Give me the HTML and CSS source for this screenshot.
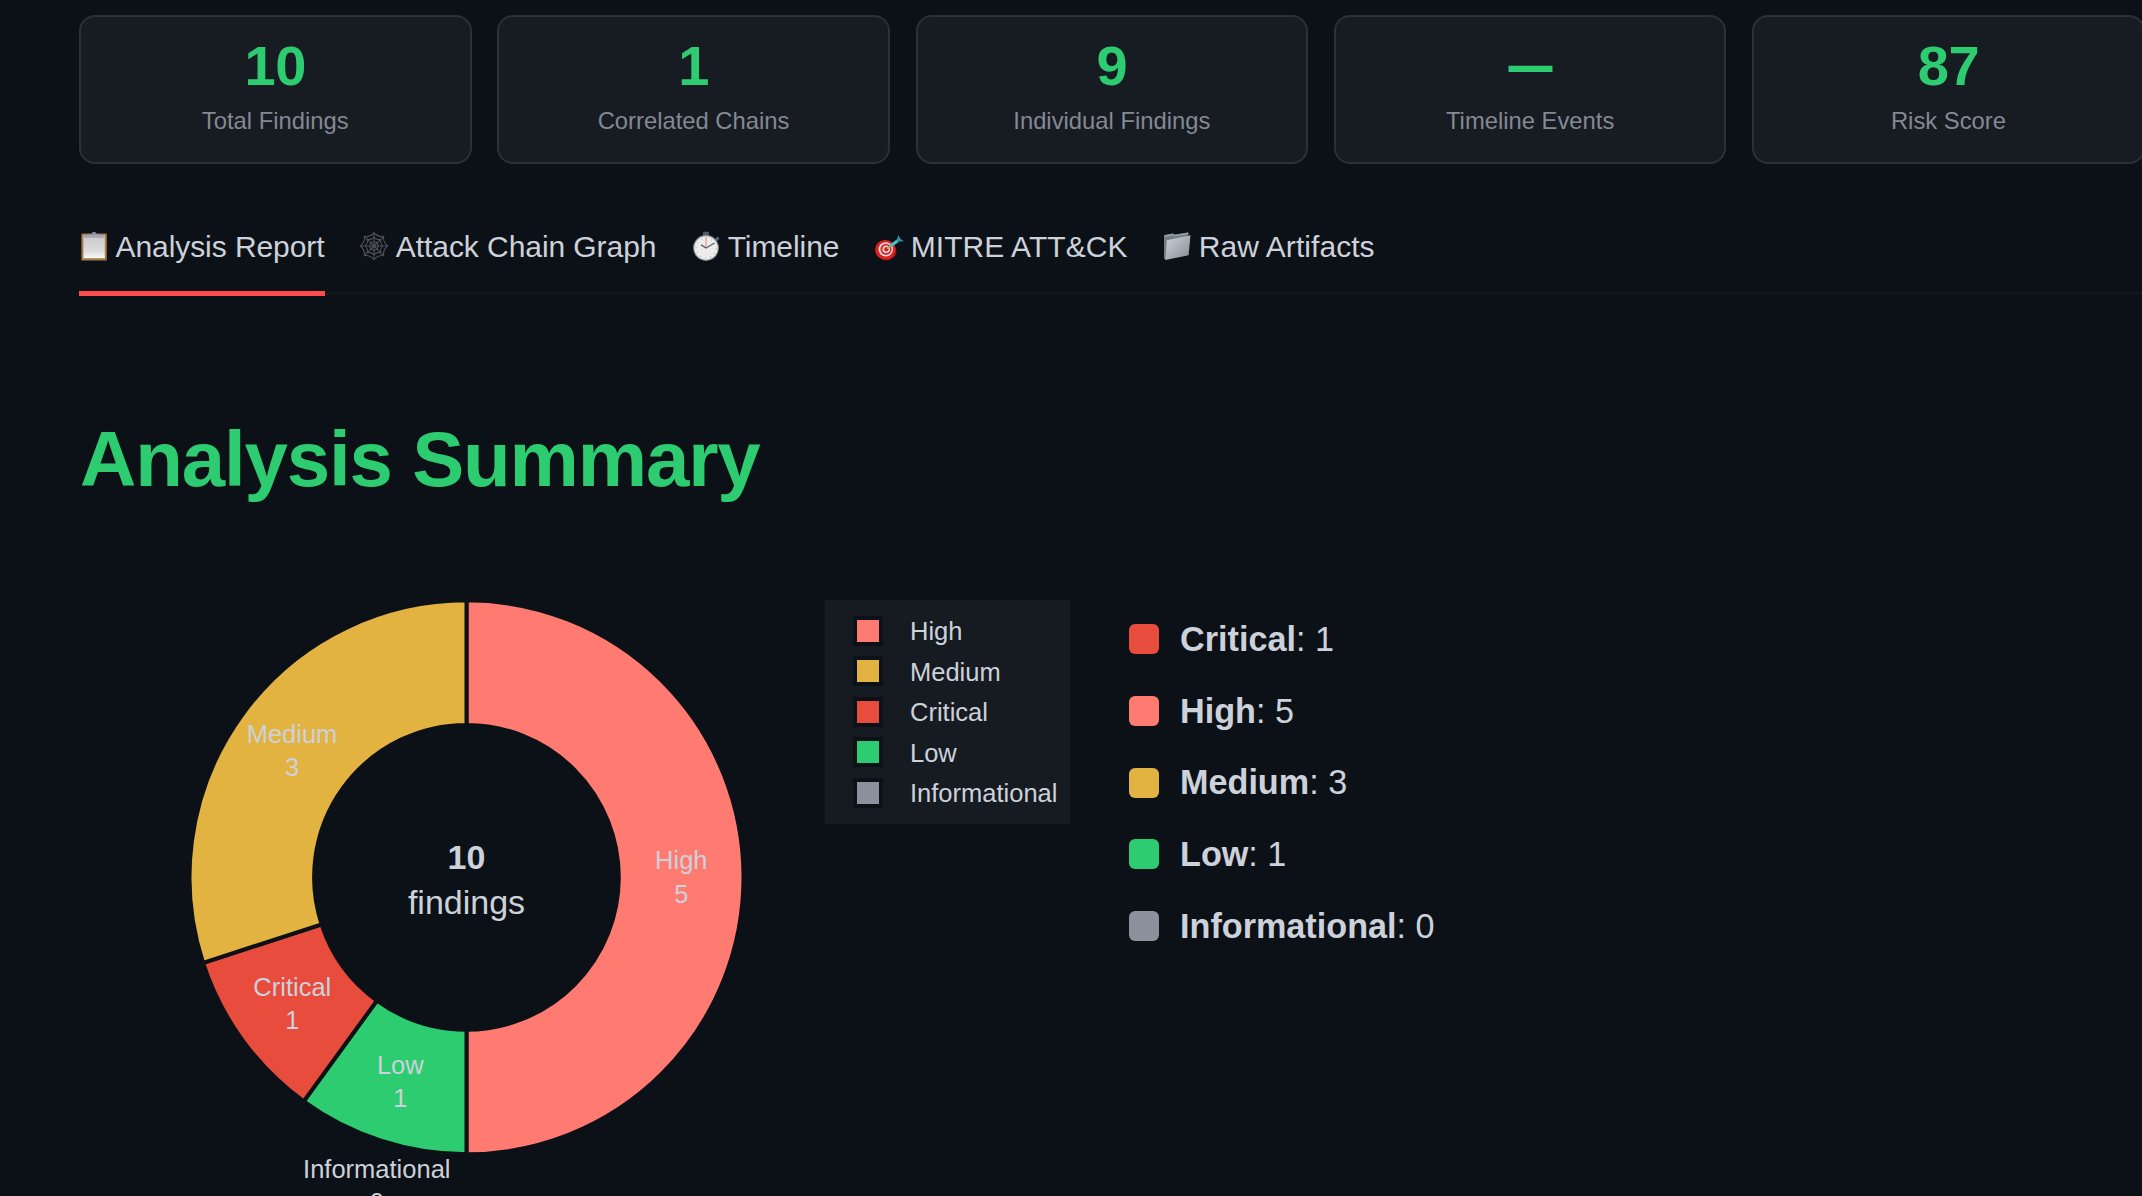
FILE: index.html
```html
<!DOCTYPE html>
<html lang="en">
<head>
<meta charset="utf-8">
<title>Analysis Report</title>
<link rel="stylesheet" href="styles.css">
</head>
<body>
<main class="page">
  <section class="metrics">
    <div class="metric"><div class="metric-value">10</div><div class="metric-label">Total Findings</div></div>
    <div class="metric"><div class="metric-value">1</div><div class="metric-label">Correlated Chains</div></div>
    <div class="metric"><div class="metric-value">9</div><div class="metric-label">Individual Findings</div></div>
    <div class="metric"><div class="metric-value"><span class="dash">—</span></div><div class="metric-label">Timeline Events</div></div>
    <div class="metric"><div class="metric-value">87</div><div class="metric-label">Risk Score</div></div>
  </section>

  <nav class="tabs">
    <a class="tab active">
      <svg class="icon" viewBox="0 0 30 30">
        <defs><linearGradient id="paper" x1="0" y1="0" x2="0" y2="1"><stop offset="0" stop-color="#c9c9c9"/><stop offset=".7" stop-color="#dcdcdc"/><stop offset="1" stop-color="#fafafa"/></linearGradient></defs>
        <rect x="2.4" y="2.6" width="25.4" height="27" rx="1.2" fill="#a67c48"/>
        <rect x="4.4" y="4.4" width="21.4" height="22.8" fill="url(#paper)"/>
        <path d="M5 6.6 L8.5 3.2 H12.5 C12.8 -.2 17.4 -.2 17.700 3.200 H21.700 L25.200 6.600 Z" fill="#8b8f99"/>
        <rect x="7" y="4.300" width="16" height="1.200" fill="#b5b8c0"/>
      </svg>
      <span>Analysis Report</span>
    </a>
    <a class="tab">
      <svg class="icon" viewBox="0 0 30 30" fill="none" stroke="#4d5055" stroke-width="1.100">
        <path d="M15 1V29M1 15H29M5 5L25 25M25 5L5 25"/>
        <path d="M15 2Q19 6 24.500 5.500Q24 11 28.500 15Q24 19 24.500 24.500Q19 24 15 28.500Q11 24 5.500 24.500Q6 19 1.500 15Q6 11 5.500 5.500Q11 6 15 2Z"/>
        <path d="M15 6.500Q18 9 21.500 8.500Q21 12 23.500 15Q21 18 21.500 21.500Q18 21 15 23.500Q12 21 8.500 21.500Q9 18 6.500 15Q9 12 8.500 8.500Q12 9 15 6.500Z"/>
        <path d="M15 10.500L18.200 11.800L19.500 15L18.200 18.200L15 19.500L11.800 18.200L10.500 15L11.800 11.800Z"/>
      </svg>
      <span>Attack Chain Graph</span>
    </a>
    <a class="tab">
      <svg class="icon" viewBox="0 0 30 30">
        <rect x="12" y=".8" width="6" height="5" rx="1" fill="#555b65"/>
        <path d="M24.500 9.500L27.500 6.500" stroke="#59616b" stroke-width="3"/>
        <circle cx="15" cy="17" r="12.900" fill="#8d9096"/>
        <circle cx="15" cy="17" r="11.700" fill="#ececec"/>
        <circle cx="15" cy="17" r="9.800" fill="none" stroke="#aaa" stroke-width="1.200" stroke-dasharray=".8 4.330"/>
        <path d="M15 17V6.500" stroke="#ee9a90" stroke-width="1.300"/>
        <path d="M10 13.800L15 17L23.500 12" fill="none" stroke="#606468" stroke-width="1.400"/>
      </svg>
      <span>Timeline</span>
    </a>
    <a class="tab wide">
      <svg class="icon" viewBox="0 0 30 30">
        <ellipse cx="12.500" cy="19.800" rx="10" ry="9.600" fill="#8f1717"/>
        <ellipse cx="11.300" cy="18.800" rx="10.200" ry="9.800" fill="#dd2020"/>
        <ellipse cx="11.800" cy="18.400" rx="7.200" ry="7.200" fill="#f0dede"/>
        <ellipse cx="12" cy="18.300" rx="5.600" ry="5.600" fill="#d32a2a"/>
        <ellipse cx="12.200" cy="18.200" rx="3.700" ry="3.800" fill="#f0dede"/>
        <ellipse cx="12.300" cy="18.200" rx="2.200" ry="2.300" fill="#d32020"/>
        <path d="M13 17.500L17 14.500" stroke="#c49a5a" stroke-width="1.800"/>
        <path d="M16.500 15L24 9.500" stroke="#42c3cf" stroke-width="3"/>
        <path d="M22.500 10.500L24.300 4L26.300 7.800L30 10.300Z" fill="#3197a5"/>
      </svg>
      <span>MITRE ATT&amp;CK</span>
    </a>
    <a class="tab wide">
      <svg class="icon" viewBox="0 0 30 30">
        <defs><linearGradient id="folder" x1="0" y1="0" x2="1" y2="1"><stop offset="0" stop-color="#cdd3da"/><stop offset="1" stop-color="#858c95"/></linearGradient></defs>
        <path d="M2 4.200L11 2.500L12.500 3.800L26 1.500L27 3L4 28.800L2 27.500Z" fill="#747d87"/>
        <path d="M2 4.200L11 2.500L12.500 3.800L26 1.500L26.500 3L13 5.500L11.500 4.500L3 6Z" fill="#939ba4"/>
        <path d="M4.800 9.200L28.500 4.300L26.600 24.300L3.400 29Z" fill="url(#folder)"/>
      </svg>
      <span>Raw Artifacts</span>
    </a>
  </nav>

  <h1 class="title">Analysis Summary</h1>

  <section class="summary">
    <svg class="donut" viewBox="180 590 600 640" role="img">
      <g class="slices">
        <path class="high" d="M466.500 600.300A277 277 0 0 1 466.500 1154.300V1029.700A152.400 152.400 0 0 0 466.500 724.900Z"/>
        <path class="low" d="M466.500 1154.300A277 277 0 0 1 303.680 1101.400L376.920 1000.590A152.400 152.400 0 0 0 466.500 1029.700Z"/>
        <path class="critical" d="M303.680 1101.400A277 277 0 0 1 203.060 962.900L321.560 924.390A152.400 152.400 0 0 0 376.920 1000.590Z"/>
        <path class="medium" d="M203.060 962.900A277 277 0 0 1 466.500 600.300V724.900A152.400 152.400 0 0 0 321.560 924.390Z"/>
      </g>
      <g class="slice-text">
        <text x="681.300" y="869">High</text><text x="681.300" y="903">5</text>
        <text x="292" y="743">Medium</text><text x="292" y="776.300">3</text>
        <text x="292.300" y="995.700">Critical</text><text x="292.300" y="1029">1</text>
        <text x="400.300" y="1073.500">Low</text><text x="400.300" y="1106.800">1</text>
        <text x="376.800" y="1178">Informational</text><text x="376.800" y="1211.300">0</text>
      </g>
      <g class="total">
        <text class="total-value" x="466.500" y="869">10</text>
        <text x="466.500" y="914">findings</text>
      </g>
    </svg>

    <ul class="legend">
      <li><i class="key high"></i><span>High</span></li>
      <li><i class="key medium"></i><span>Medium</span></li>
      <li><i class="key critical"></i><span>Critical</span></li>
      <li><i class="key low"></i><span>Low</span></li>
      <li><i class="key info"></i><span>Informational</span></li>
    </ul>

    <ul class="counts">
      <li><i class="swatch critical"></i><span><b>Critical</b>: 1</span></li>
      <li><i class="swatch high"></i><span><b>High</b>: 5</span></li>
      <li><i class="swatch medium"></i><span><b>Medium</b>: 3</span></li>
      <li><i class="swatch low"></i><span><b>Low</b>: 1</span></li>
      <li><i class="swatch info"></i><span><b>Informational</b>: 0</span></li>
    </ul>
  </section>
</main>
</body>
</html>
```
FILE: styles.css
```css
* { box-sizing: border-box; }

body {
  margin: 0;
  height: 1196px;
  overflow: hidden;
  background: #0c1117;
  color: #c9d1d9;
  font-family: "Liberation Sans", Arial, sans-serif;
}

ul { margin: 0; padding: 0; list-style: none; }

.page { padding: 15px 0 0 79px; height: 1196px; overflow: hidden; }

.metrics {
  display: grid;
  grid-template-columns: repeat(5, 392.5px);
  gap: 25.800px;
}
.metric {
  height: 149px;
  padding-top: 18px;
  border: 2px solid #2c3038;
  border-radius: 16px;
  background: #171b22;
  text-align: center;
}
.metric-value { color: #2ecc71; font-size: 56px; font-weight: 700; line-height: 62px; height: 62px; letter-spacing: -0.500px; }
.dash { display: block; font-size: 42px; line-height: 61px; -webkit-text-stroke: 1.800px #2ecc71; }
.metric-label { color: #848993; font-size: 23.800px; line-height: 28px; margin-top: 10px; }

.tabs {
  display: flex;
  gap: 34.800px;
  height: 131px;
  padding-top: 62px;
  border-bottom: 3px solid #12161d;
}
.tab { display: flex; gap: 6.500px; height: 69.500px; color: #ccd1da; font-size: 30px; line-height: 42px; letter-spacing: -0.070px; white-space: nowrap; }
.tab.active { border-bottom: 5px solid #ff4b4b; }
.tab.wide { letter-spacing: 0.060px; }
.icon { width: 30px; height: 30px; margin-top: 5px; flex: none; }

.title { margin: 119px 0 0; padding-left: 1px; color: #2ecc71; font-size: 78px; line-height: 90px; height: 90px; font-weight: 700; letter-spacing: -1.150px; }

.summary { display: flex; align-items: flex-start; margin-top: 86px; }
.donut { width: 600px; height: 640px; margin: 0 45px 0 101px; flex: none; }
.slices path { stroke: #0c1117; stroke-width: 4; }
.slice-text { fill: #ccd1da; font-size: 25.500px; text-anchor: middle; }
.total { fill: #ccd1da; font-size: 34px; text-anchor: middle; }
.total-value { font-weight: 700; }

.high { fill: #ff7b72; background: #ff7b72; }
.medium { fill: #e3b341; background: #e3b341; }
.critical { fill: #e74c3c; background: #e74c3c; }
.low { fill: #2ecc71; background: #2ecc71; }
.info { fill: #8b929e; background: #8b929e; }

.legend { width: 245px; height: 224px; margin-top: 10px; padding: 10.500px 0 0 27.500px; background: #161b22; color: #ccd1da; }
.legend li { display: flex; align-items: center; gap: 27.500px; height: 40.500px; font-size: 25.500px; }
.legend span { padding-top: 2px; }
.key { width: 30px; height: 30px; border: 4px solid #0c1117; }

.counts { margin: 13.500px 0 0 59px; color: #ccd1da; }
.counts li { display: flex; align-items: center; gap: 21px; height: 71.700px; font-size: 34.200px; white-space: nowrap; }
.swatch { width: 30px; height: 30px; border-radius: 6px; }
```
